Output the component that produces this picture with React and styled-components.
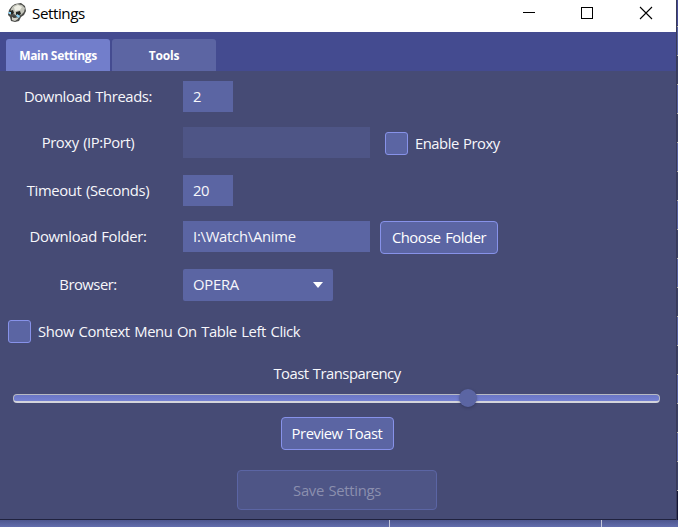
import React from "react";
import styled, { createGlobalStyle } from "styled-components";

const GlobalStyle = createGlobalStyle`
  * { box-sizing: border-box; }
  html, body { margin: 0; padding: 0; overflow: hidden; }
  body { font-family: "Open Sans", "Noto Sans", sans-serif; background: #5b65a5; }
`;

const Desktop = styled.div`
  width: 678px;
  height: 527px;
  display: grid;
  grid-template-columns: 676px 2px;
  grid-template-rows: 520px 7px;
  overflow: hidden;
`;

const Window = styled.main`
  display: flex;
  flex-direction: column;
  background: #464b75;
  border-bottom: 1px solid #20223f;
`;

const TitleBar = styled.header`
  height: 32px;
  flex: none;
  display: flex;
  align-items: flex-start;
  background: #fff;
  color: #000;
  padding: 3px 0 0 7px;
`;

const Text = styled.span`
  padding-bottom: 2px;
  font-size: ${(p) => p.$size || 14.8}px;
  line-height: 20px;
  letter-spacing: ${(p) => p.$track ?? -0.4}px;
  word-spacing: 1px;
  white-space: nowrap;
`;

const Title = styled(Text)`
  margin: 0 0 0 5px;
`;

const WindowControls = styled.div`
  margin-left: auto;
  display: flex;
  width: 176px;
  svg { display: block; width: 58px; height: 20px; }
`;

const TabBar = styled.nav`
  height: 39px;
  flex: none;
  display: flex;
  align-items: flex-end;
  gap: 2px;
  padding-left: 6px;
  background: #444b90;
`;

const Tab = styled.button`
  width: 104px;
  height: 32px;
  padding: 1px 0 0;
  border: 0;
  border-radius: 3px 3px 0 0;
  font: 700 12px/20px "Open Sans", sans-serif;
  letter-spacing: ${(p) => p.$track}px;
  color: #fff;
  background: ${(p) => (p.$active ? "#727ecb" : "#5c65a3")};
`;

const Form = styled.section`
  display: flex;
  flex-direction: column;
  color: #f7f7fb;
`;

const Row = styled.div`
  display: flex;
  align-items: flex-start;
  height: ${(p) => p.$height || 31}px;
  margin-top: ${(p) => p.$gap}px;
`;

const Label = styled.label`
  width: 176px;
  height: 31px;
  margin-right: 7px;
  display: flex;
  align-items: center;
  justify-content: center;
`;

const Field = styled.div`
  width: ${(p) => p.$width}px;
  height: ${(p) => p.$height || 31}px;
  padding: 0 10px;
  display: flex;
  align-items: center;
  justify-content: space-between;
  border-radius: ${(p) => p.$radius || 0}px;
  background: ${(p) => (p.$disabled ? "#4e5586" : "#5b65a3")};
`;

const CheckOption = styled.label`
  display: flex;
  align-items: center;
  gap: 7px;
  height: 23px;
  margin: ${(p) => p.$margin};
`;

const CheckBox = styled.span`
  width: 23px;
  height: 23px;
  border: 1px solid #8792e9;
  border-radius: 3px;
  background: #5b65a3;
`;

const Button = styled.button`
  width: ${(p) => p.$width}px;
  height: ${(p) => p.$height || 33}px;
  padding: 0;
  flex: none;
  display: flex;
  align-items: center;
  justify-content: center;
  font-family: inherit;
  border: 1px solid #8792e9;
  border-radius: 4px;
  color: #fff;
  background: #5b65a3;
  &:disabled {
    color: #8b8fae;
    border-color: #5b65a4;
    background: #4e5586;
  }
`;

const ChooseButton = styled(Button)`
  margin-left: 10px;
`;

const SaveButton = styled(Button)`
  margin-top: 20px;
  padding-top: 2px;
`;

const Stack = styled.div`
  width: 674px;
  display: flex;
  flex-direction: column;
  align-items: center;
`;

const ToastLabel = styled(Text)`
  margin-top: 20px;
`;

const SliderTrack = styled.div`
  position: relative;
  width: 647px;
  height: 9px;
  margin: 9px 1px 14px 0;
  border: solid #b7b9c4;
  border-width: 1px 1px 2px;
  border-bottom-color: #d3d4dc;
  border-radius: 4px;
  background: linear-gradient(#6a76c5, #7581d2);
`;

const Thumb = styled.div`
  position: absolute;
  left: 445px;
  top: -6px;
  width: 18px;
  height: 18px;
  border-radius: 50%;
  background: #5b65a3;
  box-shadow: 0 1px 3px rgba(25, 28, 60, 0.35);
`;

const SideEdge = styled.div`
  border-left: 1px solid #383b59;
  background:
    linear-gradient(#151638, #151638) 0 491px / 1px 29px no-repeat,
    linear-gradient(#464b94, #464b94) 0 0 / 1px 25px no-repeat,
    repeating-linear-gradient(#b7b3ad 0 1px, #5660a1 1px 29px, #b7b3ad 29px 30px, #3b4069 30px 58px) 0 26px;
`;

const BottomEdge = styled.div`
  grid-column: 1 / 3;
  display: grid;
  grid-template-columns: 389px 212px 1fr;
  background: linear-gradient(#4d568e, #626dac);
`;

const TableCell = styled.div`
  border-left: ${(p) => (p.$divided ? "1px solid #c3c6da" : "0")};
`;

const SkullIcon = () => (
  <svg width="20" height="20" viewBox="0 0 20 20" aria-label="Skull">
    <path d="M5 3 8 1 14 0 18 3 19 8 17 12 14 14 12 18 8 19 4 18 3 14 1 12 2 7Z" fill="#4b4c49" />
    <path d="M4 6 6 3 10 1 15 2 18 5 17 9 14 12 10 13 7 11 3 12Z" fill="#c4c5bb" />
    <path d="m7 4 4-2 4 2-2 3-5 1Z" fill="#efefe5" />
    <path d="m3 8 3-1 1 3-2 2-2-1Zm6 1 4-1 1 3-3 2-2-1Z" fill="#252724" />
    <path d="m5 14 3 1 4-2-1 3-3 2-3-1Z" fill="#d0d0c6" />
    <path d="m6 13 1 2m1-2v2m2-2v2" stroke="#30322f" strokeWidth=".7" />
    <path d="M1 9h3v2H2Zm9 2 3 2-1 2-3-2Z" fill="#8ed4f7" />
  </svg>
);

export default function App() {
  return (
    <>
      <GlobalStyle />
      <Desktop>
        <Window>
          <TitleBar>
            <SkullIcon />
            <Title $size={15.2} $track={-0.45}>Settings</Title>
            <WindowControls>
              <svg viewBox="0 0 58 20" shapeRendering="crispEdges"><path d="M23 9.5h12" stroke="#000" /></svg>
              <svg viewBox="0 0 58 20" shapeRendering="crispEdges"><path d="M23.5 4.5h11v11h-11z" fill="none" stroke="#000" /></svg>
              <svg viewBox="0 0 58 20"><path d="m24 4 12 12m0-12L24 16" stroke="#000" strokeWidth="1.1" /></svg>
            </WindowControls>
          </TitleBar>
          <TabBar>
            <Tab $active $track={-0.3}>Main Settings</Tab>
            <Tab $track={-0.2}>Tools</Tab>
          </TabBar>
          <Form>
            <Row $gap={10}>
              <Label><Text>Download Threads:</Text></Label>
              <Field $width={50}><Text>2</Text></Field>
            </Row>
            <Row $gap={15}>
              <Label><Text>Proxy (IP:Port)</Text></Label>
              <Field $width={187} $disabled />
              <CheckOption $margin="5px 0 0 15px"><CheckBox /><Text $track={-0.48}>Enable Proxy</Text></CheckOption>
            </Row>
            <Row $gap={17}>
              <Label><Text $track={-0.35}>Timeout (Seconds)</Text></Label>
              <Field $width={50}><Text>20</Text></Field>
            </Row>
            <Row $gap={15}>
              <Label><Text $track={-0.35}>Download Folder:</Text></Label>
              <Field $width={187}><Text $track={-0.25}>I:\Watch\Anime</Text></Field>
              <ChooseButton $width={118}><Text $track={-0.45}>Choose Folder</Text></ChooseButton>
            </Row>
            <Row $gap={17} $height={32}>
              <Label><Text $track={-0.5}>Browser:</Text></Label>
              <Field $width={150} $height={32} $radius={2}>
                <Text $track={-0.25}>OPERA</Text>
                <svg width="10" height="6" viewBox="0 0 10 6"><path d="M0 0h10L5 6z" fill="#fff" /></svg>
              </Field>
            </Row>
            <CheckOption $margin="19px 0 0 8px"><CheckBox /><Text $track={-0.38}>Show Context Menu On Table Left Click</Text></CheckOption>
            <Stack>
              <ToastLabel $track={-0.5}>Toast Transparency</ToastLabel>
              <SliderTrack><Thumb /></SliderTrack>
              <Button $width={113}><Text $track={-0.45}>Preview Toast</Text></Button>
              <SaveButton $width={200} $height={40} disabled><Text $track={-0.3}>Save Settings</Text></SaveButton>
            </Stack>
          </Form>
        </Window>
        <SideEdge />
        <BottomEdge><TableCell /><TableCell $divided /><TableCell $divided /></BottomEdge>
      </Desktop>
    </>
  );
}
